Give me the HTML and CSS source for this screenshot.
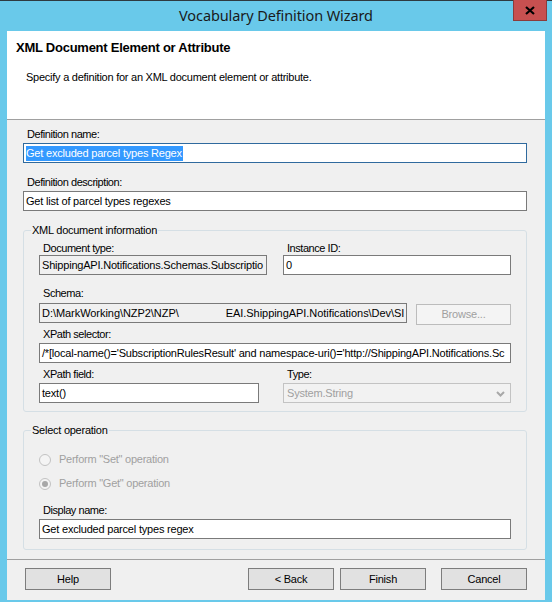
FILE: index.html
```html
<!DOCTYPE html>
<html>
<head>
<meta charset="utf-8">
<title>Vocabulary Definition Wizard</title>
<link rel="stylesheet" href="styles.css">
</head>
<body>
<div class="window">
  <div class="titlebar">
    <div class="title">Vocabulary Definition Wizard</div>
    <div class="close">
      <svg width="12" height="9" viewBox="0 0 12 9"><path d="M2 1 L10 8 M10 1 L2 8" stroke="#000" stroke-width="2.2" fill="none"/></svg>
    </div>
  </div>
  <div class="client">
    <div class="header">
      <div class="h-title">XML Document Element or Attribute</div>
      <div class="h-sub">Specify a definition for an XML document element or attribute.</div>
    </div>
    <div class="body">
      <div class="lbl lbl-first">Definition name:</div>
      <div class="tb tb-focus"><span class="sel">Get excluded parcel types Regex</span></div>
      <div class="lbl lbl-next">Definition description:</div>
      <div class="tb">Get list of parcel types regexes</div>

      <fieldset class="group group-xml">
        <legend class="legend">XML document information</legend>
        <div class="row row-1">
          <div class="col col-doc">
            <div class="lbl">Document type:</div>
            <div class="tb tb-ro">ShippingAPI.Notifications.Schemas.Subscriptio</div>
          </div>
          <div class="col col-id">
            <div class="lbl">Instance ID:</div>
            <div class="tb">0</div>
          </div>
        </div>
        <div class="lbl lbl-schema">Schema:</div>
        <div class="row row-schema">
          <div class="tb tb-ro tb-schema"><span>D:\MarkWorking\NZP2\NZP\</span><span class="path-gap">EAI.ShippingAPI.Notifications\Dev\SI</span></div>
          <div class="btn btn-disabled btn-browse">Browse...</div>
        </div>
        <div class="lbl lbl-gap">XPath selector:</div>
        <div class="tb">/*[local-name()='SubscriptionRulesResult' and namespace-uri()='http://ShippingAPI.Notifications.Sc</div>
        <div class="row row-field">
          <div class="col col-field">
            <div class="lbl">XPath field:</div>
            <div class="tb">text()</div>
          </div>
          <div class="col col-type">
            <div class="lbl">Type:</div>
            <div class="combo">
              <span class="combo-text">System.String</span>
              <svg class="chev" width="9" height="6" viewBox="0 0 9 6"><path d="M1 1 L4.5 4.5 L8 1" stroke="#a8a8a8" stroke-width="2" fill="none"/></svg>
            </div>
          </div>
        </div>
      </fieldset>

      <fieldset class="group group-op">
        <legend class="legend">Select operation</legend>
        <div class="radio radio-1"><span class="circle"></span><span class="rtext">Perform "Set" operation</span></div>
        <div class="radio radio-2"><span class="circle checked"></span><span class="rtext">Perform "Get" operation</span></div>
        <div class="lbl lbl-display">Display name:</div>
        <div class="tb">Get excluded parcel types regex</div>
      </fieldset>
    </div>
    <div class="footer">
      <div class="btn">Help</div>
      <div class="spacer"></div>
      <div class="btn">&lt; Back</div>
      <div class="btn btn-finish">Finish</div>
      <div class="btn btn-cancel">Cancel</div>
    </div>
  </div>
</div>
</body>
</html>
```

FILE: styles.css
```css
* { box-sizing: border-box; }
html, body { margin: 0; padding: 0; }
body {
  width: 552px;
  height: 602px;
  overflow: hidden;
  font-family: "Liberation Sans", Arial, sans-serif;
  font-size: 11px;
  letter-spacing: -0.45px;
  color: #000;
}
.window {
  width: 552px;
  height: 602px;
  background: #69c9ea;
  border-top: 1px solid #2e3a40;
  display: flex;
  flex-direction: column;
  padding: 0 7px 2px 7px;
}
.titlebar {
  height: 30px;
  display: grid;
  grid-template-columns: 1fr auto 1fr;
  align-items: start;
  margin: 0 -7px;
}
.title {
  grid-column: 2;
  font-family: "Noto Sans", "Open Sans", sans-serif;
  font-size: 14.5px;
  letter-spacing: -0.1px;
  color: #1a1a1a;
  line-height: 30px;
  margin-top: -1px;
}
.close {
  grid-column: 3;
  justify-self: end;
  margin-right: 5px;
  margin-top: -1px;
  width: 34px;
  height: 21px;
  background: #c75050;
  border: 1px solid #8c3b3b;
  border-top: none;
  display: flex;
  align-items: center;
  justify-content: center;
}
.client {
  flex: 1;
  background: #f0f0f0;
  display: flex;
  flex-direction: column;
}
.header {
  height: 89px;
  background: #fff;
  border-bottom: 1px solid #a0a0a0;
  padding: 9px 0 0 9px;
}
.h-title {
  font-weight: bold;
  font-size: 13px;
  line-height: 16px;
  letter-spacing: -0.25px;
}
.h-sub {
  margin-top: 15px;
  margin-left: 10px;
  line-height: 13px;
  letter-spacing: -0.25px;
}
.body {
  flex: 1;
  padding: 8px 18px 0 16px;
}
.lbl {
  line-height: 13px;
  padding-left: 4px;
  white-space: nowrap;
}
.lbl + .tb { margin-top: 2px; }
.lbl-next { margin-top: 13px; }
.tb {
  height: 20px;
  background: #fff;
  border: 1px solid #7a7a7a;
  line-height: 18px;
  padding: 0 2px;
  white-space: nowrap;
  overflow: hidden;
  letter-spacing: -0.2px;
}
.tb-focus { border-color: #2f6a9e; }
.tb-ro { background: #f0f0f0; }
.sel {
  background: #3399ff;
  color: #fff;
  display: inline-block;
  line-height: 15px;
  padding: 0 1px 0 0;
}
.tb.tb-schema { width: 368px; flex: none; letter-spacing: -0.05px; }
.path-gap { margin-left: 47px; }
.group {
  margin: 12px 0 0 0;
  border: 1px solid #d5dfe5;
  border-radius: 3px;
  padding: 0 15px 8px 15px;
  min-width: 0;
}
.group-op { margin-top: 11px; padding-bottom: 10px; }
.legend {
  line-height: 14px;
  padding: 0 1px;
  margin-left: -8px;
  letter-spacing: -0.25px;
}
.row { display: flex; }
.row-1 { margin-top: 5px; gap: 16px; }
.row-1 .lbl + .tb { margin-top: 0; }
.col { display: flex; flex-direction: column; }
.col-doc, .col-id { width: 228px; }
.lbl-schema { margin-top: 12px; }
.row-schema { margin-top: 3px; gap: 9px; align-items: flex-start; }
.lbl-gap { margin-top: 3px; }
.row-field { margin-top: 5px; gap: 24px; }
.col-field { width: 220px; }
.col-type { width: 228px; }
.combo {
  margin-top: 2px;
  height: 20px;
  border: 1px solid #c3c3c3;
  background: #f2f2f2;
  display: flex;
  align-items: center;
  justify-content: space-between;
  padding: 0 5px 0 3px;
  color: #a0a0a0;
  letter-spacing: -0.2px;
}
.chev { margin-top: 2px; }
.radio {
  display: flex;
  align-items: center;
  height: 13px;
  color: #a0a0a0;
}
.radio-1 { margin-top: 16px; }
.radio-2 { margin-top: 11px; }
.circle {
  width: 12px;
  height: 12px;
  border: 1px solid #c2c2c2;
  border-radius: 50%;
  background: #f4f4f4;
  margin-right: 8px;
  display: flex;
  align-items: center;
  justify-content: center;
}
.circle.checked::after {
  content: "";
  width: 6px;
  height: 6px;
  border-radius: 50%;
  background: #a8a8a8;
}
.rtext { line-height: 13px; letter-spacing: -0.25px; }
.lbl-display { margin-top: 14px; }
.footer {
  height: 41px;
  border-top: 1px solid #a0a0a0;
  padding: 8px 18px 0 18px;
  display: flex;
  align-items: flex-start;
}
.spacer { flex: 1; }
.btn {
  width: 86px;
  height: 22px;
  background: #e1e1e1;
  border: 1px solid #7d7d7d;
  display: flex;
  align-items: center;
  justify-content: center;
  line-height: 13px;
  letter-spacing: -0.2px;
}
.btn-finish { margin-left: 6px; }
.btn-cancel { margin-left: 15px; }
.btn.btn-disabled {
  background: #f4f4f4;
  border-color: #bcbcbc;
  color: #a0a0a0;
}
.btn.btn-browse { width: 95px; height: 21px; margin-top: 1px; flex: none; }
```
